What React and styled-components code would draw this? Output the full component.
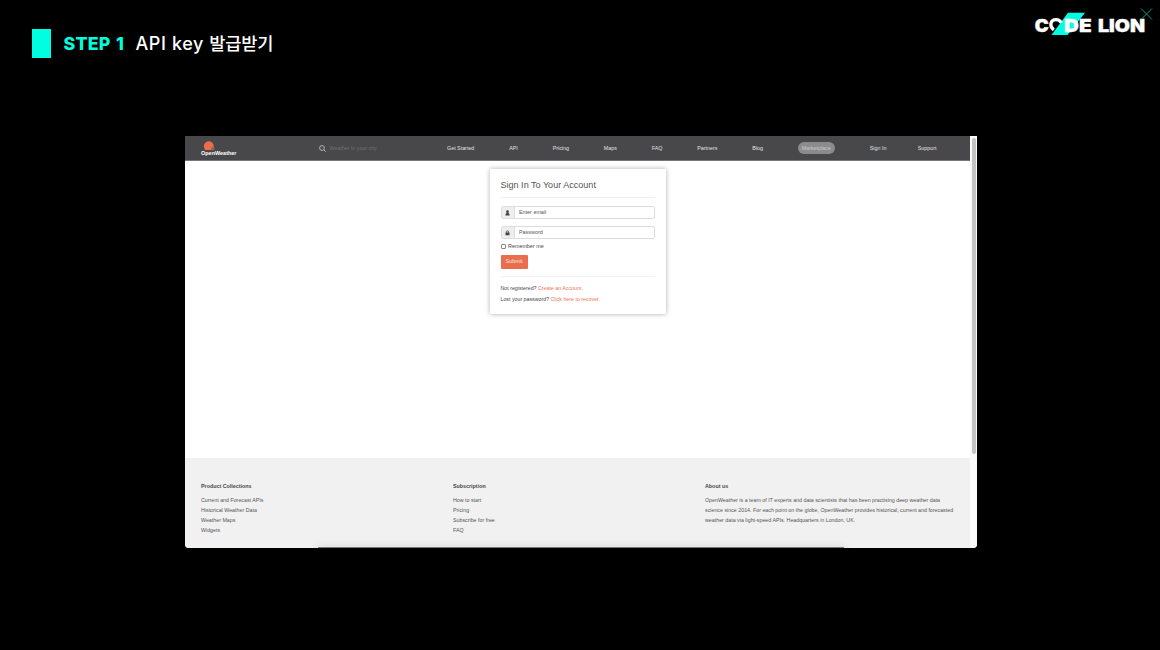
import React from 'react';
import styled, { createGlobalStyle } from 'styled-components';

const Global = createGlobalStyle`
  * { box-sizing: border-box; }
  body { margin: 0; background: #000; font-family: "Liberation Sans", Arial, sans-serif; }
`;
const Slide = styled.main`
  width: 1160px; height: 650px; background: #000; overflow: hidden; position: relative;
`;
const SlideHeader = styled.header`
  height: 136px; display: flex; align-items: flex-start; justify-content: space-between;
  padding-left: 31.5px;
`;
const Heading = styled.div`
  display: flex; align-items: center; height: 29px; margin-top: 29px;
`;
const Marker = styled.span`
  width: 19px; height: 29px; background: #00ffe0; margin-right: 13px;
`;
const Step = styled.span`
  font: 800 17.8px/29px Inter, sans-serif; color: #00ffdc; width: 72px; white-space: nowrap;
  letter-spacing: 0.2px; word-spacing: 1.5px;
`;
const Title = styled.h1`
  margin: 0; font: 500 18px/28px Inter, "Noto Sans CJK KR", sans-serif; color: #fff;
  letter-spacing: 0.6px; white-space: nowrap;
`;
const Korean = styled.span`font-size: 17.6px; letter-spacing: -0.2px;`;
const Logo = styled.svg`display: block; width: 130px; height: 45px;`;

const Browser = styled.section`
  width: 792px; height: 412px; margin-left: 185px; display: flex; overflow: hidden;
  border-radius: 0 0 4px 4px; background: #fff; position: relative;
`;
const Page = styled.div`width: 785px; display: flex; flex-direction: column;`;
const Navbar = styled.nav`
  height: 24.5px; flex: none; display: flex; align-items: center; background: #48484a;
  border-bottom: 1px solid #777; padding-left: 16px;
`;
const Brand = styled.svg`width: 40px; height: 20px; flex: none; overflow: visible;`;
const Search = styled.div`
  display: flex; align-items: center; gap: 4px; margin-left: 77.5px; width: 128.5px;
  font-size: 5.35px; color: #707072; white-space: nowrap; padding-top: 1px;
`;
const Menu = styled.div`
  display: flex; align-items: center; gap: 34.85px; height: 24px; padding-top: 1px;
`;
const NavItem = styled.a`
  font-size: 5.35px; line-height: 12px; color: #e2e2e2; white-space: nowrap;
  margin-left: ${p => p.$shift || 0}px;
`;
const NavPill = styled(NavItem)`
  width: 37px; background: #8b8b8c; border-radius: 6px; text-align: center; color: #c9c9ca;
`;
const Content = styled.div`height: 297px; flex: none; padding: 8.5px 0 0 304.5px;`;
const Card = styled.form`
  width: 176px; height: 145px; background: #fff; border-radius: 1px; padding: 11px 10.5px 0 11px;
  box-shadow: 0 0 5px rgba(0,0,0,.32);
`;
const CardTitle = styled.h2`
  margin: 0; font-size: 9.05px; font-weight: 400; line-height: 10px; color: #555; white-space: nowrap;
`;
const Rule = styled.div`height: 1px; background: #f0f0f0; margin-top: ${p => p.$top}px;`;
const Field = styled.div`
  display: flex; height: 13px; margin-top: ${p => p.$top}px; border: 1px solid #ddd;
  border-radius: 2px; overflow: hidden; background: #fff;
`;
const Addon = styled.span`
  width: 13.5px; background: #eee; border-right: 1px solid #ddd; display: flex;
  align-items: center; justify-content: center;
`;
const Placeholder = styled.span`
  font-size: 5.4px; line-height: 11px; color: #555; padding-left: 4px;
`;
const Remember = styled.label`
  display: flex; align-items: center; gap: 2.5px; height: 7px; margin-top: 3.5px;
  font-size: 5.4px; color: #484848;
`;
const Box = styled.span`width: 5px; height: 5px; border: .8px solid #888; border-radius: 1px;`;
const Submit = styled.button`
  display: block; width: 27px; height: 13.5px; margin: 5.5px 0 0; padding: 0; border: 0;
  border-radius: 1px; background: #e96e50; color: #ffe3dc;
  font: 5.4px/13px "Liberation Sans", Arial, sans-serif;
`;
const Hint = styled.p`
  margin: ${p => p.$top}px 0 0; font-size: 5.28px; line-height: 8px; color: #484848; white-space: nowrap;
`;
const HintLink = styled.a`color: #ed7558;`;

const Footer = styled.footer`
  flex: 1; display: grid; grid-template-columns: 252px 252px 1fr; background: #f1f1f1;
  padding: 23px 0 0 16px;
`;
const FootTitle = styled.h3`
  margin: 0 0 4px; font-size: 5.35px; font-weight: 700; line-height: 10px; color: #484848;
`;
const FootLine = styled.div`
  font-size: 5.3px; line-height: 10px; color: #555; white-space: nowrap;
`;
const ScrollTrack = styled.div`
  width: 7px; background: #fafafa; padding: 2px 1.5px 0 2px;
`;
const ScrollThumb = styled.div`height: 316px; border-radius: 2px; background: #c2c2c2;`;
const DockShadow = styled.div`
  position: absolute; left: 133px; bottom: 0; width: 526px; height: 1px;
  background: #777; box-shadow: 0 2px 10px 1px rgba(0,0,0,.2);
`;

const NAV = ['Get Started', 'API', 'Pricing', 'Maps', 'FAQ', 'Partners', 'Blog'];
const COLUMNS = [
  ['Product Collections', ['Current and Forecast APIs', 'Historical Weather Data', 'Weather Maps', 'Widgets']],
  ['Subscription', ['How to start', 'Pricing', 'Subscribe for free', 'FAQ']],
  ['About us', [
    'OpenWeather is a team of IT experts and data scientists that has been practising deep weather data',
    'science since 2014. For each point on the globe, OpenWeather provides historical, current and forecasted',
    'weather data via light-speed APIs. Headquarters in London, UK.',
  ]],
];

const CodeLionLogo = () => (
  <Logo viewBox="0 0 130 45">
    <path d="M38 12.700H55L37.500 35H21.500Z" fill="#00ffe0" />
    <g fill="#fff" stroke="#fff" strokeWidth=".4" fontFamily="Inter, sans-serif" fontWeight="900" fontSize="18">
      <text x="4.800" y="31.700" textLength="14" lengthAdjust="spacingAndGlyphs">C</text>
      <text x="34" y="31.700" textLength="27.500" lengthAdjust="spacingAndGlyphs">DE</text>
      <text x="68" y="31.700" textLength="47" lengthAdjust="spacingAndGlyphs">LION</text>
    </g>
    <path d="M23.800 30C18.800 26 20.500 19.700 26 19.700C28.500 19.700 30.200 20.800 31.300 22.800" fill="none" stroke="#fff" strokeWidth="3.300" />
    <path d="M111 8.500L122 19.500M122 8.500L111 19.500" stroke="#079b89" strokeWidth="1" />
  </Logo>
);

export default function App() {
  return (
    <>
      <Global />
      <Slide>
        <SlideHeader>
          <Heading>
            <Marker />
            <Step>STEP 1</Step>
            <Title>API key <Korean>발급받기</Korean></Title>
          </Heading>
          <CodeLionLogo />
        </SlideHeader>
        <Browser>
          <Page>
            <Navbar>
              <Brand viewBox="0 0 40 20">
                <path d="M3.800 11.300A5 5 0 1 1 12.700 8.800Q13.500 11 13 12H4Z" fill="#eb6e4b" />
                <circle cx="11.800" cy="10.800" r="1.800" fill="#a85a47" />
                <text x="0" y="17" textLength="35.500" lengthAdjust="spacingAndGlyphs" fill="#fff" fontFamily="Liberation Sans, sans-serif" fontWeight="700" fontSize="5.400">OpenWeather</text>
              </Brand>
              <Search>
                <svg width="7" height="7" viewBox="0 0 7 7" fill="none" stroke="#bcbcbc" strokeWidth=".9">
                  <circle cx="3" cy="3" r="2.400" /><path d="M4.800 4.800L6.700 6.700" />
                </svg>
                Weather in your city
              </Search>
              <Menu>
                {NAV.map(n => <NavItem key={n}>{n}</NavItem>)}
                <NavPill>Marketplace</NavPill>
                <NavItem>Sign In</NavItem>
                <NavItem $shift={-3.5}>Support</NavItem>
              </Menu>
            </Navbar>
            <Content>
              <Card>
                <CardTitle>Sign In To Your Account</CardTitle>
                <Rule $top={7} />
                <Field $top={8}>
                  <Addon>
                    <svg width="5" height="6" viewBox="0 0 5 6" fill="#444">
                      <circle cx="2.500" cy="1.700" r="1.400" /><path d="M.5 5.400V4L1.800 2.700H3.200L4.500 4V5.400Z" />
                    </svg>
                  </Addon>
                  <Placeholder>Enter email</Placeholder>
                </Field>
                <Field $top={7}>
                  <Addon>
                    <svg width="5" height="6" viewBox="0 0 5 6" fill="#444">
                      <path d="M.5 2.600H4.500V5.200H.5Z" /><path d="M1.400 2.800V1.900A1.100 1.100 0 0 1 3.600 1.900V2.800" fill="none" stroke="#444" strokeWidth=".8" />
                    </svg>
                  </Addon>
                  <Placeholder>Password</Placeholder>
                </Field>
                <Remember><Box />Remember me</Remember>
                <Submit type="button">Submit</Submit>
                <Rule $top={7} />
                <Hint $top={7}>Not registered? <HintLink>Create an Account.</HintLink></Hint>
                <Hint $top={3.5}>Lost your password? <HintLink>Click here to recover.</HintLink></Hint>
              </Card>
            </Content>
            <Footer>
              {COLUMNS.map(([title, lines]) => (
                <div key={title}>
                  <FootTitle>{title}</FootTitle>
                  {lines.map(l => <FootLine key={l}>{l}</FootLine>)}
                </div>
              ))}
            </Footer>
          </Page>
          <ScrollTrack><ScrollThumb /></ScrollTrack>
          <DockShadow />
        </Browser>
      </Slide>
    </>
  );
}
